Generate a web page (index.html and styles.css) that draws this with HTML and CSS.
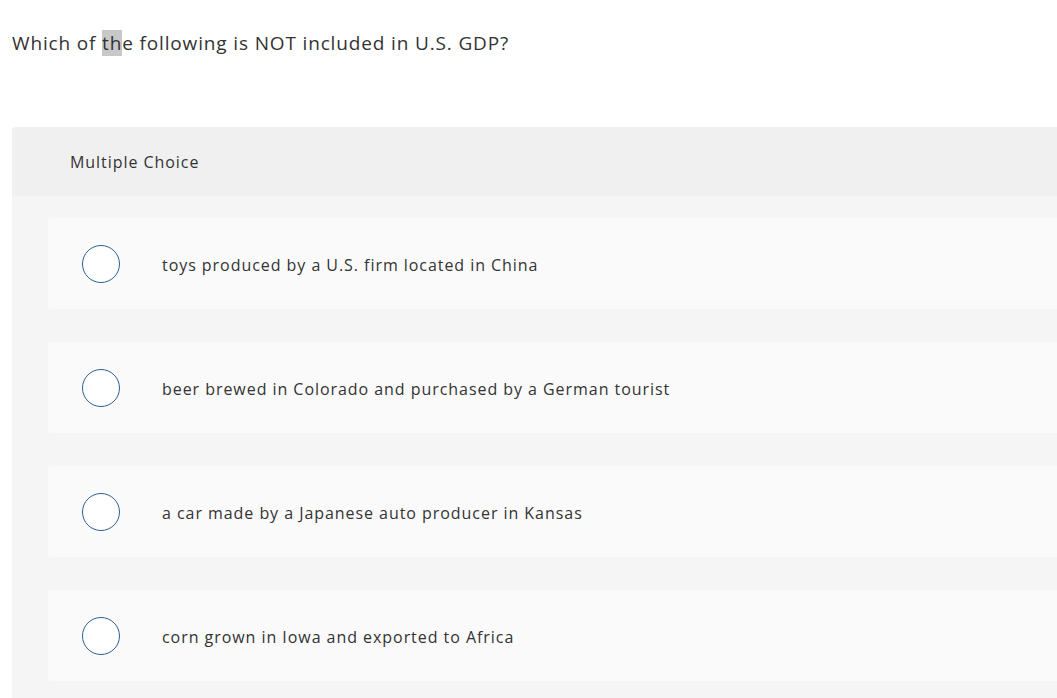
FILE: index.html
```html
<!DOCTYPE html>
<html>
<head>
<meta charset="utf-8">
<link rel="stylesheet" href="styles.css">
</head>
<body>
<div class="page">
  <p class="question">Which of <span class="hl">th</span>e following is NOT included in U.S. GDP?</p>
  <div class="panel">
    <div class="panel-head">Multiple Choice</div>
    <div class="choices">
      <div class="choice"><span class="radio"></span><span class="label">toys produced by a U.S. firm located in China</span></div>
      <div class="choice"><span class="radio"></span><span class="label">beer brewed in Colorado and purchased by a German tourist</span></div>
      <div class="choice"><span class="radio"></span><span class="label">a car made by a Japanese auto producer in Kansas</span></div>
      <div class="choice"><span class="radio"></span><span class="label">corn grown in Iowa and exported to Africa</span></div>
    </div>
  </div>
</div>
</body>
</html>
```
FILE: styles.css
```css
html, body {
  margin: 0;
  padding: 0;
  background: #ffffff;
}
body {
  font-family: "Open Sans", "Liberation Sans", sans-serif;
  color: #333333;
  overflow: hidden;
}
.page {
  width: 1057px;
  height: 698px;
  overflow: hidden;
}
.question {
  margin: 0;
  padding: 29px 0 0 12px;
  font-size: 19px;
  line-height: 28px;
  letter-spacing: 0.85px;
  color: #333333;
}
.hl {
  background: #c8c8c8;
}
.panel {
  margin: 70px 0 0 12px;
  width: 1100px;
  background: #f5f5f5;
  border-top-left-radius: 4px;
  overflow: hidden;
}
.panel-head {
  height: 69px;
  background: #f0f0f0;
  padding-left: 58px;
  display: flex;
  align-items: center;
  font-size: 16px;
  letter-spacing: 0.95px;
  color: #333333;
}
.choices {
  display: flex;
  flex-direction: column;
  gap: 33px;
  padding: 22px 0 20px 36px;
}
.choice {
  height: 91px;
  background: #fafafa;
  border-radius: 4px;
  display: flex;
  align-items: center;
  padding-left: 34px;
}
.radio {
  width: 36px;
  height: 36px;
  border: 1.2px solid #2b5f95;
  border-radius: 50%;
  background: #ffffff;
  flex: none;
}
.label {
  margin-left: 42px;
  font-size: 16px;
  letter-spacing: 0.95px;
  color: #333333;
  position: relative;
  top: 1px;
}
```
